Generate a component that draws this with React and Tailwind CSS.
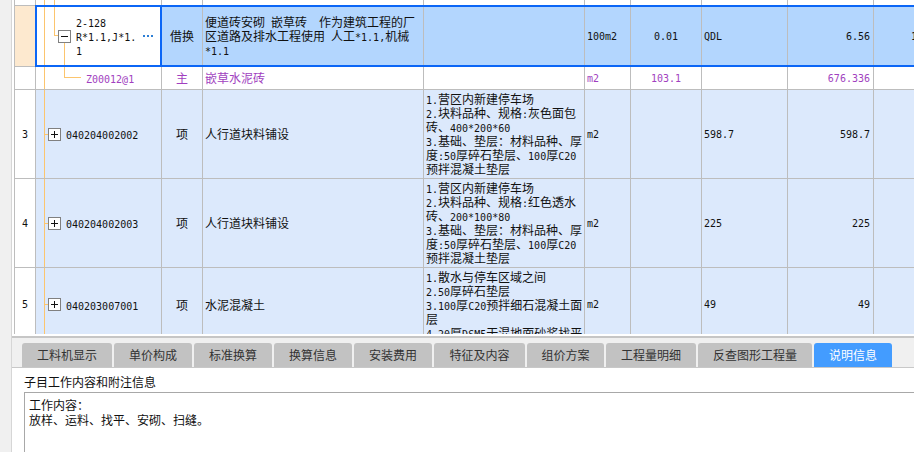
import React from 'react';

const MONO = "font-['DejaVu_Sans_Mono',monospace] text-[10px]";
const cellBase = "shrink-0 h-full border-r border-[#bdbdbd] overflow-hidden flex items-center";
const ORANGE = '#fcc56e';

// split ascii runs into the narrow mono face, cjk stays on the main face
const mix = (s) =>
  s
    .split(/([\x20-\x7e]+)/)
    .filter(Boolean)
    .map((p, i) =>
      /^[\x20-\x7e]+$/.test(p) ? (
        <span key={i} className={MONO}>{p}</span>
      ) : (
        <span key={i}>{p}</span>
      )
    );

const Lines = ({ lines }) => (
  <div className="whitespace-pre">
    {lines.map((l, i) => (
      <div key={i} className="h-[14px] leading-[14px]">{mix(l)}</div>
    ))}
  </div>
);

const Toggle = ({ plus }) => (
  <svg className="relative shrink-0" width="13" height="13" viewBox="0 0 13 13" shapeRendering="crispEdges">
    <rect x="0.5" y="0.5" width="12" height="12" fill="#fff" stroke="#808080" />
    <path d="M3 6.5h7" stroke="#111" />
    {plus && <path d="M6.5 3v7" stroke="#111" />}
  </svg>
);

const Tree = ({ children }) => (
  <svg className="absolute inset-0 w-full h-full pointer-events-none" shapeRendering="crispEdges">
    {children}
  </svg>
);

const ItemRow = ({ num, code, name, feat, qty, h }) => (
  <div className={`flex shrink-0 border-b border-[#bdbdbd] bg-[#dce9fc] ${h}`}>
    <div className={`${cellBase} w-[21px] bg-white justify-center`}>{mix(num)}</div>
    <div className={`${cellBase} w-[126px] relative pl-[12px]`}>
      <Tree>
        <line x1="8.5" y1="0" x2="8.5" y2="100%" stroke={ORANGE} />
        <line x1="8" y1="50%" x2="12" y2="50%" stroke={ORANGE} />
      </Tree>
      <Toggle plus />
      <span className="relative ml-[5px]">{mix(code)}</span>
    </div>
    <div className={`${cellBase} w-[41px] justify-center`}>项</div>
    <div className={`${cellBase} w-[221px] pl-[2px]`}>{name}</div>
    <div className={`${cellBase} w-[161px] pl-[2px]`}>
      <Lines lines={feat} />
    </div>
    <div className={`${cellBase} w-[46px] pl-[2px]`}>{mix('m2')}</div>
    <div className={`${cellBase} w-[71px]`} />
    <div className={`${cellBase} w-[86px] pl-[2px]`}>{mix(qty)}</div>
    <div className={`${cellBase} w-[86px] justify-end pr-[3px]`}>{mix(qty)}</div>
    <div className={`${cellBase} w-[100px]`} />
  </div>
);

const tabs = [
  ['工料机显示', 'w-[90px]'],
  ['单价构成', 'w-[78px]'],
  ['标准换算', 'w-[78px]'],
  ['换算信息', 'w-[78px]'],
  ['安装费用', 'w-[78px]'],
  ['特征及内容', 'w-[91px]'],
  ['组价方案', 'w-[77px]'],
  ['工程量明细', 'w-[90px]'],
  ['反查图形工程量', 'w-[114px]'],
  ['说明信息', 'w-[78px]'],
];

const App = () => {
  return (
    <div className="flex w-[914px] h-[452px] overflow-hidden bg-white text-[12px] text-[#111] font-['Noto_Sans_CJK_SC',sans-serif]">
      <div className="shrink-0 w-[12px] h-full bg-[#f0f0f0] border-r border-[#d6d6d6]" />
      <div className="flex-1 min-w-0 h-full flex flex-col">
        {/* grid */}
        <div className="shrink-0 h-[334px] overflow-hidden pl-[2px] bg-white">
          <div className="h-full border-l border-[#bdbdbd]">
            {/* row above, cut off */}
            <div className="flex h-[5px]">
              <div className={`${cellBase} w-[21px]`} />
              <div className={`${cellBase} w-[126px] relative`}>
                <Tree>
                  <line x1="8.5" y1="0" x2="8.5" y2="100%" stroke={ORANGE} />
                  <line x1="18.5" y1="0" x2="18.5" y2="100%" stroke={ORANGE} />
                </Tree>
              </div>
              <div className={`${cellBase} w-[41px]`} />
              <div className={`${cellBase} w-[221px]`} />
              <div className={`${cellBase} w-[161px]`} />
              <div className={`${cellBase} w-[46px]`} />
              <div className={`${cellBase} w-[71px]`} />
              <div className={`${cellBase} w-[86px]`} />
              <div className={`${cellBase} w-[86px]`} />
              <div className={`${cellBase} w-[100px]`} />
            </div>

            {/* selected row */}
            <div className="flex h-[62px]">
              <div className="shrink-0 w-[20px] h-full bg-[#fde9cf] border-y border-[#bdbdbd]" />
              <div className="flex flex-1 min-w-0 h-full border-y-2 border-l-2 border-[#0b66f6] bg-[#b3d6fe] overflow-hidden">
                <div className="shrink-0 w-[125px] h-full border-r-2 border-[#0b66f6] bg-white relative flex items-center pl-[21px]">
                  <Tree>
                    <line x1="7.5" y1="0" x2="7.5" y2="100%" stroke={ORANGE} />
                    <path d="M17.5 0V28.5H21" fill="none" stroke={ORANGE} />
                    <line x1="27.5" y1="35" x2="27.5" y2="100%" stroke={ORANGE} />
                  </Tree>
                  <Toggle />
                  <div className="relative ml-[5px]">
                    <Lines lines={['2-128', 'R*1.1,J*1.', '1']} />
                  </div>
                  <svg className="relative ml-auto mr-[7px]" width="10" height="2" shapeRendering="crispEdges">
                    <rect x="0" y="0" width="2" height="2" fill="#2d7fd5" />
                    <rect x="4" y="0" width="2" height="2" fill="#2d7fd5" />
                    <rect x="8" y="0" width="2" height="2" fill="#2d7fd5" />
                  </svg>
                </div>
                <div className={`${cellBase} w-[41px] justify-center`}>借换</div>
                <div className={`${cellBase} w-[221px] pl-[2px]`}>
                  <Lines lines={['便道砖安砌 嵌草砖  作为建筑工程的厂', '区道路及排水工程使用 人工*1.1,机械', '*1.1']} />
                </div>
                <div className={`${cellBase} w-[161px]`} />
                <div className={`${cellBase} w-[46px] pl-[2px]`}>{mix('100m2')}</div>
                <div className={`${cellBase} w-[71px] justify-center`}>{mix('0.01')}</div>
                <div className={`${cellBase} w-[86px] pl-[2px]`}>{mix('QDL')}</div>
                <div className={`${cellBase} w-[86px] justify-end pr-[3px]`}>{mix('6.56')}</div>
                <div className={`${cellBase} w-[100px] pl-[37px]`}>{mix('1')}</div>
              </div>
            </div>

            {/* material sub row */}
            <div className="flex h-[23px] border-b border-[#bdbdbd] bg-white text-[#a13fc0]">
              <div className={`${cellBase} w-[21px]`} />
              <div className={`${cellBase} w-[126px] relative pl-[50px]`}>
                <Tree>
                  <line x1="8.5" y1="0" x2="8.5" y2="100%" stroke={ORANGE} />
                  <path d="M28.5 0V10.5H45" fill="none" stroke={ORANGE} />
                </Tree>
                <span className="relative">{mix('Z00012@1')}</span>
              </div>
              <div className={`${cellBase} w-[41px] justify-center`}>主</div>
              <div className={`${cellBase} w-[221px] pl-[2px]`}>嵌草水泥砖</div>
              <div className={`${cellBase} w-[161px]`} />
              <div className={`${cellBase} w-[46px] pl-[2px]`}>{mix('m2')}</div>
              <div className={`${cellBase} w-[71px] justify-center`}>{mix('103.1')}</div>
              <div className={`${cellBase} w-[86px]`} />
              <div className={`${cellBase} w-[86px] justify-end pr-[3px]`}>{mix('676.336')}</div>
              <div className={`${cellBase} w-[100px]`} />
            </div>

            <ItemRow
              h="h-[89px]"
              num="3"
              code="040204002002"
              name="人行道块料铺设"
              qty="598.7"
              feat={[
                '1.营区内新建停车场',
                '2.块料品种、规格:灰色面包',
                '砖、400*200*60',
                '3.基础、垫层：材料品种、厚',
                '度:50厚碎石垫层、100厚C20',
                '预拌混凝土垫层',
              ]}
            />
            <ItemRow
              h="h-[89px]"
              num="4"
              code="040204002003"
              name="人行道块料铺设"
              qty="225"
              feat={[
                '1.营区内新建停车场',
                '2.块料品种、规格:红色透水',
                '砖、200*100*80',
                '3.基础、垫层：材料品种、厚',
                '度:50厚碎石垫层、100厚C20',
                '预拌混凝土垫层',
              ]}
            />
            <ItemRow
              h="h-[74px]"
              num="5"
              code="040203007001"
              name="水泥混凝土"
              qty="49"
              feat={[
                '1.散水与停车区域之间',
                '2.50厚碎石垫层',
                '3.100厚C20预拌细石混凝土面',
                '层',
                '4.20厚DSM5干混地面砂浆找平',
              ]}
            />
          </div>
        </div>
        <div className="shrink-0 h-[2px] bg-white" />
        <div className="shrink-0 h-[2px] bg-[#c6c6c6]" />

        {/* tab bar */}
        <div className="shrink-0 h-[30px] flex items-end gap-[2px] pl-[10px] bg-[#f0f0f0] border-b border-[#c8c8c8]">
          {tabs.map(([label, w], i) => {
            const active = i === tabs.length - 1;
            return (
              <div
                key={label}
                className={`shrink-0 h-[24px] ${w} rounded-t-[3px] flex items-center justify-center text-[12px] ${
                  active ? 'bg-[#439cff] text-white' : 'bg-[#c2c2c2] text-[#333]'
                }`}
              >
                {label}
              </div>
            );
          })}
        </div>

        {/* description panel */}
        <div className="flex-1 min-h-0 flex flex-col bg-white pl-[12px] overflow-hidden">
          <div className="shrink-0 mt-[6px] leading-[16px]">子目工作内容和附注信息</div>
          <div className="flex-1 mt-[2px] border border-r-0 border-b-0 border-[#a8a8a8] pl-[4px] pt-[4px] leading-[15px]">
            <div>工作内容：</div>
            <div>放样、运料、找平、安砌、扫缝。</div>
          </div>
        </div>
      </div>
    </div>
  );
};

export default App;
